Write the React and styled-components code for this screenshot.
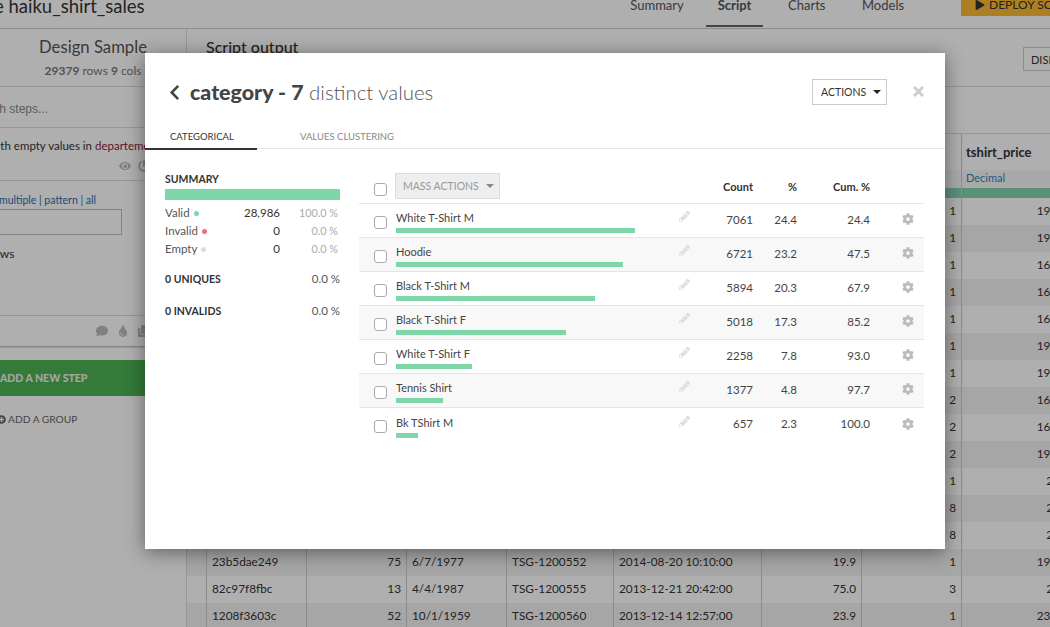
import React from "react";
import styled, { createGlobalStyle, css } from "styled-components";
import {
  FaChevronLeft,
  FaTimes,
  FaPencilAlt,
  FaCog,
  FaEye,
  FaPowerOff,
  FaComment,
  FaTint,
  FaClone,
  FaPlay,
  FaPlusCircle,
} from "react-icons/fa";

const values = [
  { name: "White T-Shirt M", count: 7061, pct: "24.4", cum: "24.4" },
  { name: "Hoodie", count: 6721, pct: "23.2", cum: "47.5" },
  { name: "Black T-Shirt M", count: 5894, pct: "20.3", cum: "67.9" },
  { name: "Black T-Shirt F", count: 5018, pct: "17.3", cum: "85.2" },
  { name: "White T-Shirt F", count: 2258, pct: "7.8", cum: "93.0" },
  { name: "Tennis Shirt", count: 1377, pct: "4.8", cum: "97.7" },
  { name: "Bk TShirt M", count: 657, pct: "2.3", cum: "100.0" },
];

// rows hidden behind the modal only need their last two columns
const hidden = [
  ["1", "19.9"], ["1", "19.9"], ["1", "16.9"], ["1", "16.9"], ["1", "16.9"],
  ["1", "19.9"], ["1", "19.9"], ["2", "16.9"], ["2", "16.9"], ["2", "19.9"],
  ["1", "20"], ["8", "20"], ["8", "20"],
];
const rows = [
  ...hidden.map(([qty, price]) => ["", "", "", "", "", "", qty, price]),
  ["23b5dae249", "75", "6/7/1977", "TSG-1200552", "2014-08-20 10:10:00", "19.9", "1", "19.9"],
  ["82c97f8fbc", "13", "4/4/1987", "TSG-1200555", "2013-12-21 20:42:00", "75.0", "3", "20"],
  ["1208f3603c", "52", "10/1/1959", "TSG-1200560", "2013-12-14 12:57:00", "23.9", "1", "23.9"],
];
const rightCols = [1, 5, 6, 7];

const GlobalStyle = createGlobalStyle`
  html, body {
    margin: 0;
    height: 100%;
    overflow: hidden;
    background: #fff;
    font-family: "Lato", "Noto Sans", sans-serif;
    color: #333;
  }
`;

const Page = styled.div`
  position: relative;
  width: 1050px;
  height: 627px;
  overflow: hidden;
`;

const Overlay = styled.div`
  position: absolute;
  inset: 0;
  background: rgba(0, 0, 0, 0.315);
`;

/* page behind the modal */
const TopBar = styled.header`
  height: 28px;
  border-bottom: 1px solid #ccc;
  display: flex;
  justify-content: space-between;
  overflow: hidden;
`;

const ProjectTitle = styled.div`
  margin: -7px 0 0 -59px;
  font-size: 18.5px;
  line-height: 26px;
  color: #333;
  white-space: nowrap;
`;

const TopRight = styled.div`
  display: flex;
  align-items: flex-start;
`;

const TopTab = styled.div`
  width: ${(p) => p.$w}px;
  height: 28px;
  margin-right: ${(p) => p.$gap}px;
  text-align: center;
  font-size: 13px;
  line-height: 11px;
  color: #555;
  ${(p) =>
    p.$active &&
    css`
      font-weight: 700;
      border-bottom: 2px solid #666;
      height: 27px;
      box-sizing: border-box;
    `}
`;

const DeployButton = styled.div`
  width: 89px;
  height: 16px;
  box-sizing: border-box;
  background: #f9b932;
  display: flex;
  align-items: flex-start;
  gap: 4px;
  padding-left: 14px;
  font-size: 12px;
  line-height: 9px;
  white-space: nowrap;
  overflow: hidden;
  color: #333;
  svg {
    font-size: 10px;
    flex: none;
  }
`;

const Columns = styled.div`
  display: flex;
  height: 598px;
`;

const Sidebar = styled.aside`
  width: 186px;
  flex: none;
  border-right: 1px solid #ddd;
  overflow: hidden;
`;

const DesignBox = styled.div`
  height: 58px;
  border-bottom: 1px solid #ddd;
  text-align: center;
  box-sizing: border-box;
  padding-top: 8px;
`;

const DesignTitle = styled.div`
  font-size: 16.7px;
  line-height: 21px;
  color: #555;
`;

const DesignMeta = styled.div`
  margin-top: 5px;
  font-size: 12px;
  line-height: 15px;
  color: #777;
  b {
    color: #777;
  }
`;

const Search = styled.div`
  height: 41px;
  border-bottom: 1px solid #ddd;
  margin-left: -32px;
  padding-top: 15px;
  box-sizing: border-box;
  font-family: "Liberation Sans", sans-serif;
  font-size: 12px;
  color: #888;
`;

const StepCard = styled.div`
  margin: 7px 0 14px -30px;
  height: 211px;
  background: #fff;
  box-shadow: 0 1px 2px rgba(0, 0, 0, 0.35);
  display: flex;
  flex-direction: column;
`;

const StepTop = styled.div`
  height: 46px;
  border-bottom: 1px solid #ddd;
  padding: 3px 0 0 0;
  box-sizing: border-box;
  font-size: 11.5px;
  line-height: 15px;
  white-space: nowrap;
  span {
    color: #8a1a3c;
  }
`;

const StepSentence = styled.div`
  margin-left: -52px;
`;

const StepIcons = styled.div`
  display: flex;
  gap: ${(p) => p.$gap}px;
  color: #bbb;
  font-size: 12px;
  margin-top: ${(p) => p.$top}px;
  padding-left: ${(p) => p.$left}px;
`;

const StepBody = styled.div`
  flex: 1;
  padding-top: 12px;
  font-size: 10.5px;
`;

const Modes = styled.div`
  color: #2a6fb0;
  padding-left: 29px;
  line-height: 14px;
`;

const FakeInput = styled.div`
  margin: 2px 0 0 0;
  width: 152px;
  height: 26px;
  border: 1px solid #bbb;
  box-sizing: border-box;
`;

const StepText = styled.div`
  margin-top: 11px;
  padding-left: 19px;
  font-size: 12px;
  color: #333;
`;

const StepFooter = styled.div`
  height: 31px;
  border-top: 1px solid #ddd;
  box-sizing: border-box;
  display: flex;
  align-items: center;
`;

const AddStep = styled.div`
  height: 36px;
  background: #4db253;
  color: #f0f0f0;
  font-weight: 900;
  font-size: 10.5px;
  line-height: 36px;
  white-space: nowrap;
`;

const AddGroup = styled.div`
  margin: 17px 0 0 -3px;
  display: flex;
  align-items: center;
  gap: 2px;
  font-size: 10.2px;
  color: #666;
  svg {
    font-size: 9px;
  }
`;

const Main = styled.main`
  flex: 1;
  min-width: 0;
  overflow: hidden;
`;

const OutputHead = styled.div`
  height: 58px;
  border-bottom: 1px solid #ddd;
  box-sizing: border-box;
  padding: 8px 0 0 19px;
  display: flex;
  justify-content: space-between;
`;

const OutputTitle = styled.div`
  font-size: 16px;
  font-weight: 500;
  line-height: 20px;
`;

const DisplayButton = styled.div`
  width: 60px;
  height: 24px;
  margin: 10px -33px 0 0;
  border: 1px solid #ccc;
  box-sizing: border-box;
  padding-left: 7px;
  font-size: 11px;
  line-height: 23px;
  white-space: nowrap;
`;

const Toolbar = styled.div`
  height: 47px;
  border-bottom: 1px solid #ddd;
  box-sizing: border-box;
`;

const TableRow = styled.div`
  display: grid;
  grid-template-columns: 20px 100px 100px 100px 107px 148px 100px 100px 104px;
  height: ${(p) => p.$h}px;
  background: ${(p) => p.$bg};
`;

const Cell = styled.div`
  border-right: 1px solid #ccc;
  padding: 0 5px;
  font-size: 11.8px;
  line-height: ${(p) => p.$h - 1}px;
  white-space: nowrap;
  overflow: hidden;
  text-align: ${(p) => (p.$right ? "right" : "left")};
  color: #333;
`;

const ColumnName = styled(Cell)`
  font-size: 13px;
  font-weight: 700;
  padding: 1px 0 0 4px;
`;

const ColumnType = styled(Cell)`
  font-size: 11px;
  padding-left: 4px;
  color: #2a86b8;
`;

/* modal */
const Modal = styled.section`
  position: absolute;
  left: 145px;
  top: 53px;
  width: 800px;
  height: 496px;
  background: #fff;
  box-shadow: 0 3px 18px rgba(0, 0, 0, 0.45);
`;

const ModalHead = styled.div`
  height: 69px;
  padding: 26px 19px 0 25px;
  box-sizing: border-box;
  display: flex;
  align-items: flex-start;
`;

const BackIcon = styled(FaChevronLeft)`
  font-size: 17px;
  color: #444;
  margin: 5px 7px 0 -4px;
`;

const ModalTitle = styled.h1`
  flex: 1;
  margin: 0;
  font-size: 20.4px;
  line-height: 27px;
  font-weight: 300;
  color: #555;
  b {
    color: #444;
    font-size: 21.4px;
    font-weight: 900;
  }
`;

const ActionsButton = styled.button`
  width: 75px;
  height: 26px;
  border: 1px solid #ccc;
  background: #fff;
  padding: 0 0 0 8px;
  display: flex;
  align-items: center;
  gap: 7px;
  font: inherit;
  font-size: 10.5px;
  color: #333;
`;

const Caret = styled.i`
  width: 0;
  height: 0;
  border-left: 4px solid transparent;
  border-right: 4px solid transparent;
  border-top: 4px solid ${(p) => p.$color};
`;

const CloseIcon = styled(FaTimes)`
  font-size: 15px;
  color: #ccc;
  margin: 5px 0 0 24px;
`;

const Tabs = styled.nav`
  height: 27px;
  border-bottom: 1px solid #e5e5e5;
  box-sizing: border-box;
  display: flex;
`;

const Tab = styled.div`
  width: ${(p) => p.$w}px;
  height: 28px;
  box-sizing: border-box;
  padding-left: ${(p) => p.$left}px;
  font-size: 9.5px;
  line-height: 30px;
  color: ${(p) => (p.$active ? "#333" : "#888")};
  border-bottom: ${(p) => (p.$active ? "2px solid #333" : "none")};
`;

const ModalBody = styled.div`
  display: flex;
  padding: 23px 21px 0 20px;
`;

const Summary = styled.div`
  width: 175px;
  margin-right: 19px;
  flex: none;
`;

const SectionLabel = styled.div`
  font-size: 10.5px;
  font-weight: 700;
  line-height: 14px;
  color: #333;
`;

const SummaryBar = styled.div`
  height: 11px;
  margin-top: 3px;
  background: #7fd6a9;
`;

const SummaryGrid = styled.div`
  display: grid;
  grid-template-columns: 115px 58px;
  grid-auto-rows: 18px;
  margin-top: 4px;
  font-size: 11.5px;
  line-height: 18px;
`;

const SummaryName = styled.div`
  color: #555;
  display: flex;
  align-items: center;
  gap: 4px;
  position: relative;
`;

const Dot = styled.i`
  width: 5px;
  height: 5px;
  border-radius: 50%;
  background: ${(p) => p.$color};
`;

const SummaryValue = styled.div`
  position: absolute;
  right: 0;
  color: #333;
`;

const SummaryPct = styled.div`
  text-align: right;
  font-size: 10.8px;
  color: #aaa;
`;

const TotalRow = styled.div`
  display: flex;
  justify-content: space-between;
  margin-top: ${(p) => p.$top}px;
  font-size: 10.5px;
  line-height: 14px;
  font-weight: 700;
  span {
    font-weight: 400;
    font-size: 11.5px;
    color: #555;
  }
`;

const ValuesPanel = styled.div`
  flex: 1;
  min-width: 0;
`;

const valuesGrid = css`
  display: grid;
  grid-template-columns: 37px 283px 12px 62px 44px 73px 33px 11px 10px;
  align-items: center;
`;

const ValuesHead = styled.div`
  ${valuesGrid}
  height: 31px;
  margin-top: 1px;
  border-bottom: 1px solid #e5e5e5;
  box-sizing: border-box;
`;

const HeadNum = styled.div`
  font-size: 11px;
  font-weight: 700;
  text-align: right;
  color: #333;
  white-space: nowrap;
  margin-top: -4px;
`;

const MassButton = styled.div`
  width: 105px;
  height: 26px;
  margin: -4px 0 0 -1px;
  border: 1px solid #ddd;
  background: #eee;
  box-sizing: border-box;
  padding-left: 7px;
  display: flex;
  align-items: center;
  gap: 7px;
  font-size: 10.5px;
  color: #999;
`;

const ValueRow = styled.div`
  ${valuesGrid}
  height: 34px;
  box-sizing: border-box;
  background: ${(p) => (p.$even ? "#f8f8f8" : "#fff")};
  border-bottom: ${(p) => (p.$last ? "none" : "1px solid #e5e5e5")};
`;

const Check = styled.input.attrs({ type: "checkbox" })`
  appearance: none;
  width: 13px;
  height: 13px;
  margin: ${(p) => (p.$head ? "3px 0 0 15px" : "3px 0 0 15px")};
  border: 1px solid #aaa;
  border-radius: 3px;
  background: #fff;
`;

const ValueName = styled.div`
  margin-top: 3px;
  font-size: 11px;
  line-height: 14px;
  color: #444;
`;

const BarTrack = styled.div`
  width: 239px;
  height: 5px;
  margin-top: 3px;
`;

const Bar = styled.div`
  height: 100%;
  background: #7fd6a9;
`;

const Pencil = styled(FaPencilAlt)`
  font-size: 11px;
  color: #ddd;
  margin-top: -8px;
`;

const Num = styled.div`
  font-size: 11.5px;
  text-align: right;
  color: #444;
  margin-top: -3px;
`;

const Gear = styled(FaCog)`
  font-size: 12px;
  color: #bbb;
  margin-top: -3px;
  margin-left: -1px;
`;

const maxCount = Math.max(...values.map((v) => v.count));

export default function App() {
  return (
    <Page>
      <GlobalStyle />
      <TopBar>
        <ProjectTitle>Prepare haiku_shirt_sales</ProjectTitle>
        <TopRight>
          <TopTab $w={54} $gap={22}>Summary</TopTab>
          <TopTab $w={57} $gap={25} $active>Script</TopTab>
          <TopTab $w={36} $gap={38}>Charts</TopTab>
          <TopTab $w={40} $gap={59}>Models</TopTab>
          <DeployButton><FaPlay /> DEPLOY SCRIPT</DeployButton>
        </TopRight>
      </TopBar>
      <Columns>
        <Sidebar>
          <DesignBox>
            <DesignTitle>Design Sample</DesignTitle>
            <DesignMeta><b>29379</b> rows <b>9</b> cols</DesignMeta>
          </DesignBox>
          <Search>Search steps...</Search>
          <StepCard>
            <StepTop>
              <StepSentence>Remove rows with empty values in <span>departement</span></StepSentence>
              <StepIcons $gap={7} $top={7} $left={149}><FaEye /><FaPowerOff /></StepIcons>
            </StepTop>
            <StepBody>
              <Modes>multiple | pattern | all</Modes>
              <FakeInput />
              <StepText>rows</StepText>
            </StepBody>
            <StepFooter>
              <StepIcons $gap={9} $top={0} $left={126}><FaComment /><FaTint /><FaClone /></StepIcons>
            </StepFooter>
          </StepCard>
          <AddStep>ADD A NEW STEP</AddStep>
          <AddGroup><FaPlusCircle /> ADD A GROUP</AddGroup>
        </Sidebar>
        <Main>
          <OutputHead>
            <OutputTitle>Script output</OutputTitle>
            <DisplayButton>DISPLAY</DisplayButton>
          </OutputHead>
          <Toolbar />
          <TableRow $h={36} $bg="#fff">
            {Array.from({ length: 8 }, (_, i) => <Cell key={i} $h={36} />)}
            <ColumnName $h={35}>tshirt_price</ColumnName>
          </TableRow>
          <TableRow $h={18} $bg="#f6f6f6">
            {Array.from({ length: 8 }, (_, i) => <Cell key={i} $h={18} />)}
            <ColumnType $h={17}>Decimal</ColumnType>
          </TableRow>
          <TableRow $h={10} $bg="#84d4b0">
            {Array.from({ length: 9 }, (_, i) => <Cell key={i} $h={10} />)}
          </TableRow>
          {rows.map((row, r) => (
            <TableRow key={r} $h={27} $bg={r % 2 ? "#f2f2f2" : "#fff"}>
              <Cell $h={27} />
              {row.map((text, c) => (
                <Cell key={c} $h={27} $right={rightCols.includes(c)}>{text}</Cell>
              ))}
            </TableRow>
          ))}
        </Main>
      </Columns>
      <Overlay />
      <Modal>
        <ModalHead>
          <BackIcon />
          <ModalTitle><b>category - 7</b> distinct values</ModalTitle>
          <ActionsButton>ACTIONS <Caret $color="#222" /></ActionsButton>
          <CloseIcon />
        </ModalHead>
        <Tabs>
          <Tab $w={112} $left={25} $active>CATEGORICAL</Tab>
          <Tab $w={260} $left={43}>VALUES CLUSTERING</Tab>
        </Tabs>
        <ModalBody>
          <Summary>
            <SectionLabel>SUMMARY</SectionLabel>
            <SummaryBar />
            <SummaryGrid>
              <SummaryName>Valid <Dot $color="#7fd6a9" /><SummaryValue>28,986</SummaryValue></SummaryName>
              <SummaryPct>100.0 %</SummaryPct>
              <SummaryName>Invalid <Dot $color="#e8707a" /><SummaryValue>0</SummaryValue></SummaryName>
              <SummaryPct>0.0 %</SummaryPct>
              <SummaryName>Empty <Dot $color="#ddd" /><SummaryValue>0</SummaryValue></SummaryName>
              <SummaryPct>0.0 %</SummaryPct>
            </SummaryGrid>
            <TotalRow $top={14}>0 UNIQUES <span>0.0 %</span></TotalRow>
            <TotalRow $top={18}>0 INVALIDS <span>0.0 %</span></TotalRow>
          </Summary>
          <ValuesPanel>
            <ValuesHead>
              <Check $head />
              <MassButton>MASS ACTIONS <Caret $color="#888" /></MassButton>
              <span />
              <HeadNum>Count</HeadNum>
              <HeadNum>%</HeadNum>
              <HeadNum>Cum. %</HeadNum>
            </ValuesHead>
            {values.map((v, i) => (
              <ValueRow key={v.name} $even={i % 2 === 1} $last={i === values.length - 1}>
                <Check />
                <ValueName>
                  {v.name}
                  <BarTrack>
                    <Bar style={{ width: `${(v.count / maxCount) * 100}%` }} />
                  </BarTrack>
                </ValueName>
                <Pencil />
                <Num>{v.count}</Num>
                <Num>{v.pct}</Num>
                <Num>{v.cum}</Num>
                <span />
                <Gear />
              </ValueRow>
            ))}
          </ValuesPanel>
        </ModalBody>
      </Modal>
    </Page>
  );
}
